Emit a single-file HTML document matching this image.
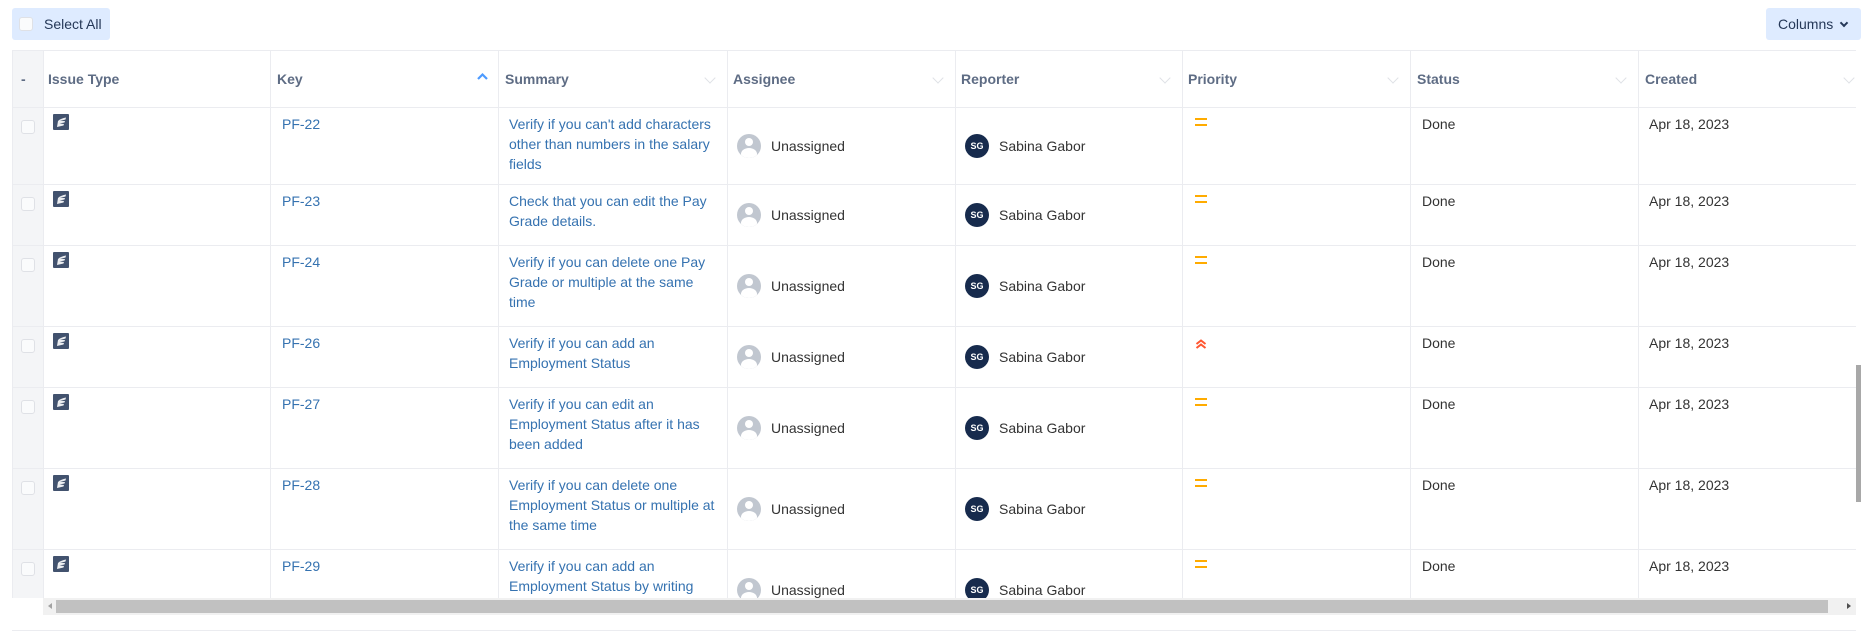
<!DOCTYPE html>
<html><head><meta charset="utf-8"><style>
*{box-sizing:border-box;margin:0;padding:0}
body{width:1861px;height:620px;overflow:hidden;background:#fff;font-family:"Liberation Sans",Arial,sans-serif;font-size:14px;color:#172b4d;position:relative}
.a{position:absolute}
.btn{background:#deebff;border-radius:3px;height:32px;top:8px;color:#253858;font-size:14px;line-height:32px}
.cb{width:14px;height:14px;border:1.5px solid #dfe1e6;border-radius:3px;background:#fafbfc}
.vl{position:absolute;top:50px;height:548px;width:1px;background:#ebecf0}
.hl{position:absolute;left:12px;width:1844px;height:1px;background:#ebecf0}
.h{position:absolute;top:70px;font-weight:bold;color:#5e6c84;line-height:18px}
.chev{position:absolute;top:74px;width:8px;height:8px;border-right:1.5px solid #dfe1e6;border-bottom:1.5px solid #dfe1e6;transform:rotate(45deg)}
.lk{color:#3572b0;line-height:20px}
.t{line-height:20px;color:#333}
.av{width:24px;height:24px;border-radius:50%}
.sg{background:#172b4d;color:#fff;font-size:9px;font-weight:bold;text-align:center;line-height:24px}
.ua{background:#c1c7d0;overflow:hidden}
.eq{width:12px;height:2px;background:#ffab00}
</style></head><body>
<div class="a btn" style="left:12px;width:98px"><div class="a cb" style="left:7px;top:9px"></div><span style="position:absolute;left:32px">Select All</span></div>
<div class="a btn" style="left:1766px;width:95px;padding-left:12px">Columns <span style="display:inline-block;width:6px;height:6px;border-right:2px solid #253858;border-bottom:2px solid #253858;transform:rotate(45deg);margin-left:4px;position:relative;top:-3px"></span></div>

<div class="a" style="left:12px;top:50px;width:31px;height:548px;background:#f4f5f7"></div>
<div class="hl" style="top:50px"></div>
<div class="hl" style="top:107px"></div>
<div class="vl" style="left:12px"></div>
<div class="vl" style="left:43px"></div>
<div class="vl" style="left:270px"></div>
<div class="vl" style="left:498px"></div>
<div class="vl" style="left:727px"></div>
<div class="vl" style="left:955px"></div>
<div class="vl" style="left:1182px"></div>
<div class="vl" style="left:1410px"></div>
<div class="vl" style="left:1638px"></div>

<div class="h" style="left:21px">-</div>
<div class="h" style="left:48px">Issue Type</div>
<div class="h" style="left:277px">Key</div>
<svg class="a" style="left:477px;top:72px" width="11" height="8"><path d="M1 7L5.5 2.5L10 7" stroke="#4c9aff" stroke-width="2.2" fill="none"/></svg>
<div class="h" style="left:505px">Summary</div><div class="chev" style="left:706px"></div>
<div class="h" style="left:733px">Assignee</div><div class="chev" style="left:934px"></div>
<div class="h" style="left:961px">Reporter</div><div class="chev" style="left:1161px"></div>
<div class="h" style="left:1188px">Priority</div><div class="chev" style="left:1389px"></div>
<div class="h" style="left:1417px">Status</div><div class="chev" style="left:1617px"></div>
<div class="h" style="left:1645px">Created</div><div class="chev" style="left:1845px"></div>

<div id="rows"></div>
<script>
var R=[[107,77,"PF-22","Verify if you can't add characters<br>other than numbers in the salary<br>fields",0],
[184,61,"PF-23","Check that you can edit the Pay<br>Grade details.",0],
[245,81,"PF-24","Verify if you can delete one Pay<br>Grade or multiple at the same<br>time",0],
[326,61,"PF-26","Verify if you can add an<br>Employment Status",1],
[387,81,"PF-27","Verify if you can edit an<br>Employment Status after it has<br>been added",0],
[468,81,"PF-28","Verify if you can delete one<br>Employment Status or multiple at<br>the same time",0],
[549,81,"PF-29","Verify if you can add an<br>Employment Status by writing<br>",0]];
var h="";
R.forEach(function(r){var y=r[0],m=y+Math.round(r[1]/2);
h+='<div class="hl" style="top:'+(y+r[1])+'px"></div>';
h+='<div class="a cb" style="left:21px;top:'+(y+13)+'px"></div>';
h+='<svg class="a" style="left:53px;top:'+(y+7)+'px" width="16" height="16"><rect width="16" height="16" rx="1" fill="#42526e"/><path d="M4 13L5 7C7 5 10 4 13 3.5L12.5 5.5L7 7L12 7L11.5 8.5L6.5 9.5L11 10L10.5 11.5Z" fill="#fff" opacity=".9"/></svg>';
h+='<div class="a lk" style="left:282px;top:'+(y+7)+'px">'+r[2]+'</div>';
h+='<div class="a lk" style="left:509px;top:'+(y+7)+'px">'+r[3]+'</div>';
h+='<div class="a av ua" style="left:737px;top:'+(m-12)+'px"><div class="a" style="left:8px;top:4px;width:8px;height:8px;border-radius:50%;background:#fff"></div><div class="a" style="left:4px;top:14px;width:16px;height:12px;border-radius:50%;background:#fff"></div></div>';
h+='<div class="a t" style="left:771px;top:'+(m-10)+'px">Unassigned</div>';
h+='<div class="a av sg" style="left:965px;top:'+(m-12)+'px">SG</div>';
h+='<div class="a t" style="left:999px;top:'+(m-10)+'px">Sabina Gabor</div>';
if(r[4])h+='<svg class="a" style="left:1195px;top:'+(y+13)+'px" width="12" height="10"><path d="M1.5 5L6 1.5L10.5 5M1.5 9L6 5.5L10.5 9" stroke="#ff5630" stroke-width="2" fill="none"/></svg>';
else h+='<div class="a eq" style="left:1195px;top:'+(y+11)+'px"></div><div class="a eq" style="left:1195px;top:'+(y+17)+'px"></div>';
h+='<div class="a t" style="left:1422px;top:'+(y+7)+'px">Done</div>';
h+='<div class="a t" style="left:1649px;top:'+(y+7)+'px">Apr 18, 2023</div>';
});
document.getElementById("rows").innerHTML=h;
</script>
<div class="a" style="left:43px;top:598px;width:1813px;height:22px;background:#fff"></div>
<div class="a" style="left:43px;top:598px;width:1813px;height:17px;background:#f1f1f1"></div>
<div class="a" style="left:56px;top:600px;width:1772px;height:13px;background:#c1c1c1"></div>
<div class="a" style="left:48px;top:603px;width:0;height:0;border-top:3.5px solid transparent;border-bottom:3.5px solid transparent;border-right:4px solid #a3a3a3"></div>
<div class="a" style="left:1847px;top:603px;width:0;height:0;border-top:3.5px solid transparent;border-bottom:3.5px solid transparent;border-left:4px solid #505050"></div>
<div class="a" style="left:1856px;top:365px;width:5px;height:137px;background:#a8a8a8"></div>
</body></html>
